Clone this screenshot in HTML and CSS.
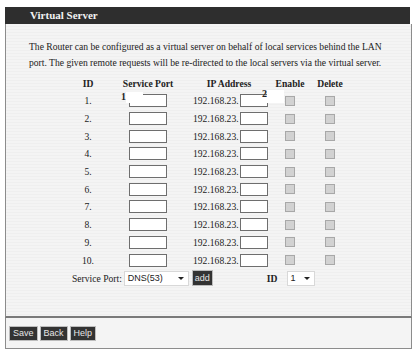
FILE: index.html
```html
<!DOCTYPE html>
<html lang="en">
<head>
    <meta charset="UTF-8">
    <title>Virtual Server</title>
    <link rel="stylesheet" href="styles.css">
</head>
<body>
    <div class="page">
        <div class="title-bar">Virtual Server</div>

        <div class="panel">
            <p class="intro">The Router can be configured as a virtual server on behalf of local services behind the LAN<br>port. The given remote requests will be re-directed to the local servers via the virtual server.</p>

            <div class="vs-grid">
                <div class="th">ID</div>
                <div class="th">Service Port</div>
                <div class="th th-ip">IP Address</div>
                <div class="th">Enable</div>
                <div class="th">Delete</div>

                <div class="td">1.</div><div class="td"><span class="box"></span></div><div class="td ip">192.168.23.<span class="box"></span></div><div class="td"><span class="chk"></span></div><div class="td"><span class="chk"></span></div>
                <div class="td">2.</div><div class="td"><span class="box"></span></div><div class="td ip">192.168.23.<span class="box"></span></div><div class="td"><span class="chk"></span></div><div class="td"><span class="chk"></span></div>
                <div class="td">3.</div><div class="td"><span class="box"></span></div><div class="td ip">192.168.23.<span class="box"></span></div><div class="td"><span class="chk"></span></div><div class="td"><span class="chk"></span></div>
                <div class="td">4.</div><div class="td"><span class="box"></span></div><div class="td ip">192.168.23.<span class="box"></span></div><div class="td"><span class="chk"></span></div><div class="td"><span class="chk"></span></div>
                <div class="td">5.</div><div class="td"><span class="box"></span></div><div class="td ip">192.168.23.<span class="box"></span></div><div class="td"><span class="chk"></span></div><div class="td"><span class="chk"></span></div>
                <div class="td">6.</div><div class="td"><span class="box"></span></div><div class="td ip">192.168.23.<span class="box"></span></div><div class="td"><span class="chk"></span></div><div class="td"><span class="chk"></span></div>
                <div class="td">7.</div><div class="td"><span class="box"></span></div><div class="td ip">192.168.23.<span class="box"></span></div><div class="td"><span class="chk"></span></div><div class="td"><span class="chk"></span></div>
                <div class="td">8.</div><div class="td"><span class="box"></span></div><div class="td ip">192.168.23.<span class="box"></span></div><div class="td"><span class="chk"></span></div><div class="td"><span class="chk"></span></div>
                <div class="td">9.</div><div class="td"><span class="box"></span></div><div class="td ip">192.168.23.<span class="box"></span></div><div class="td"><span class="chk"></span></div><div class="td"><span class="chk"></span></div>
                <div class="td">10.</div><div class="td"><span class="box"></span></div><div class="td ip">192.168.23.<span class="box"></span></div><div class="td"><span class="chk"></span></div><div class="td"><span class="chk"></span></div>
            </div>

            <div class="add-row">
                <span class="lbl">Service Port:</span>
                <span class="select sel-port">DNS(53)<i class="arrow"></i></span>
                <span class="btn btn-add">add</span>
                <span class="lbl lbl-id">ID</span>
                <span class="select sel-id">1<i class="arrow"></i></span>
            </div>

            <!-- callout numbers pasted over the screenshot -->
            <span class="callout callout-1">1</span>
            <span class="callout callout-2">2</span>
        </div>

        <div class="footer">
            <span class="btn">Save</span>
            <span class="btn">Back</span>
            <span class="btn">Help</span>
        </div>
    </div>
</body>
</html>
```

FILE: styles.css
```css
body {
    margin: 0;
    background: #fff;
    font-family: "Liberation Serif", "Times New Roman", serif;
    color: #222;
}
.page {
    padding: 7px 3px 0 5px;
}
.title-bar {
    height: 17px;
    line-height: 17px;
    background: #2e2e2e;
    color: #f2f2f2;
    font-weight: bold;
    font-size: 11px;
    padding-left: 25px;
    margin-right: 2px;
}
.panel {
    position: relative;
    height: 277px;
    border: 1px solid #8c8c8c;
    border-top: none;
    border-bottom: 2px solid #7a7a7a;
    background: repeating-linear-gradient(#f4f4f4 0, #f4f4f4 2px, #efefef 2px, #efefef 3px);
    padding: 15px 0 0 23px;
}
.intro {
    margin: 0;
    font-size: 9.6px;
    line-height: 16px;
}
.vs-grid {
    display: grid;
    grid-template-columns: 36px 84px 88px 24px 56px;
    grid-template-rows: 18px repeat(10, 17.7px);
    margin: 3px 0 0 41px;
    font-size: 9.6px;
}
.th {
    font-weight: bold;
    display: flex;
    align-items: center;
    justify-content: center;
    white-space: nowrap;
}
.th-ip {
    padding-right: 10px;
}
.td {
    display: flex;
    align-items: center;
    justify-content: center;
    white-space: nowrap;
}
.td.ip {
    justify-content: flex-start;
    padding-left: 3px;
}
.box {
    display: inline-block;
    width: 36px;
    height: 11px;
    background: #fff;
    border: 1px solid #6e6e6e;
}
.td.ip .box {
    width: 26px;
    margin-left: 1px;
}
.chk {
    display: inline-block;
    width: 8px;
    height: 8px;
    background: #d2d2d2;
    border: 1px solid #a8a8a8;
}
.add-row {
    display: flex;
    align-items: center;
    height: 17px;
    margin-left: 43px;
    margin-top: 1px;
    font-size: 9.6px;
}
.lbl {
    margin-right: 2px;
}
.lbl-id {
    font-weight: bold;
    margin-left: 55px;
    margin-right: 9px;
}
.select {
    display: inline-flex;
    align-items: center;
    justify-content: space-between;
    height: 13px;
    background: #fff;
    border: 1px solid #d8d8d8;
    font-family: "Liberation Sans", Arial, sans-serif;
    font-size: 9px;
    padding: 0 4px 0 3px;
}
.sel-port {
    width: 56px;
}
.sel-id {
    width: 19px;
}
.arrow {
    width: 0;
    height: 0;
    border-left: 3px solid transparent;
    border-right: 3px solid transparent;
    border-top: 3px solid #222;
}
.btn {
    display: inline-block;
    background: #333;
    color: #e6e6e6;
    font-family: "Liberation Sans", Arial, sans-serif;
    font-size: 9px;
    line-height: 13px;
    padding: 0 3px;
    outline: 1px solid #bdbdbd;
}
.btn-add {
    margin-left: 4px;
    line-height: 14px;
    padding: 0 2px;
}
.footer {
    height: 21px;
    border-left: 1px solid #8c8c8c;
    border-right: 1px solid #8c8c8c;
    border-bottom: 1px solid #8c8c8c;
    background: #f4f4f4;
    padding: 9px 0 0 4px;
    display: flex;
    align-items: flex-start;
    gap: 4px;
}
.callout {
    position: absolute;
    font-weight: bold;
    font-size: 10px;
    line-height: 10px;
}
.callout::after {
    content: "";
    position: absolute;
    background: #fff;
}
.callout-1 {
    left: 115px;
    top: 68px;
}
.callout-1::after {
    left: 5px;
    top: 0;
    width: 17px;
    height: 11px;
}
.callout-2 {
    left: 256px;
    top: 65px;
}
.callout-2::after {
    left: 5px;
    top: 1px;
    width: 17px;
    height: 13px;
}
```
